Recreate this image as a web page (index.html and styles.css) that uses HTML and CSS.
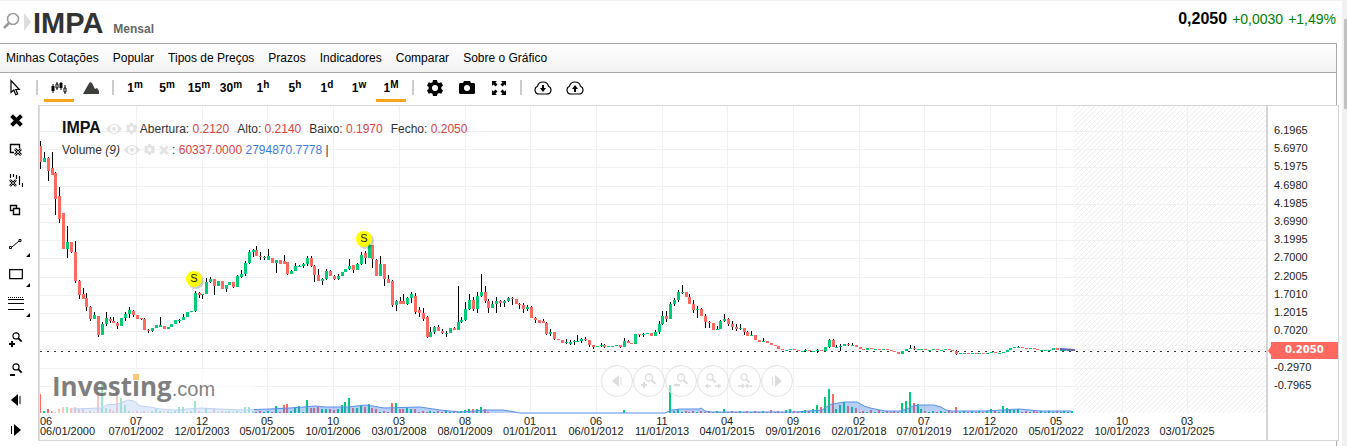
FILE: index.html
```html
<!DOCTYPE html>
<html lang="pt">
<head>
  <meta charset="UTF-8">
  <title>IMPA - Mensal</title>
  <link rel="stylesheet" href="styles.css">
</head>
<body>
  <!-- shared icons -->
  <svg class="defs">
    <symbol id="gear" viewBox="0 0 16 16">
      <path fill-rule="evenodd" fill="currentColor" d="M6 0h4l.5 2.3 1.5.8 2.2-.8 1.8 3.2-1.600 1.600v1.800l1.600 1.600-1.800 3.200-2.200-.8-1.500.8L10 16H6l-.5-2.300-1.500-.8-2.200.8L0 10.500l1.600-1.600V7.100L0 5.500l1.800-3.200 2.200.8 1.500-.8zM8 5a3 3 0 1 0 0 6 3 3 0 0 0 0-6z"/>
    </symbol>
    <symbol id="eye" viewBox="0 0 16 12">
      <path fill-rule="evenodd" fill="currentColor" d="M0 6Q8-4 16 6 8 16 0 6zM8 2a4 4 0 1 0 0 8 4 4 0 0 0 0-8z"/>
      <circle cx="8" cy="6" r="2" fill="currentColor"/>
    </symbol>
    <symbol id="cross" viewBox="0 0 12 12">
      <path d="M1.500 1.500l9 9M10.500 1.500l-9 9" stroke="currentColor" stroke-width="3.600"/>
    </symbol>
    <symbol id="lens" viewBox="0 0 16 16">
      <circle cx="8" cy="4.500" r="3.500" fill="none" stroke="currentColor" stroke-width="1.300"/>
      <path d="M10.500 7l4 4" stroke="currentColor" stroke-width="2.200"/>
    </symbol>
    <symbol id="left" viewBox="0 0 16 16">
      <path d="M10 2v12L3 8z" fill="currentColor"/><path d="M12 4v8" stroke="currentColor"/>
    </symbol>
    <symbol id="right" viewBox="0 0 16 16">
      <path d="M6 2v12l7-6z" fill="currentColor"/><path d="M3.500 4v8" stroke="currentColor"/>
    </symbol>
    <symbol id="cloud" viewBox="0 0 18 14">
      <path d="M5 13a4 4 0 0 1-1.500-7.700C4 2.500 6 1 9 1s5 1.500 5.500 4.300A4 4 0 0 1 13 13z" fill="none" stroke="currentColor" stroke-width="1.200"/>
    </symbol>
  </svg>

  <div class="page">
    <div class="widget">
      <header class="header">
        <svg class="search-icon" width="32" height="26" viewBox="0 0 32 26">
          <circle cx="13" cy="12" r="5.500" fill="none" stroke="#999" stroke-width="1.500"/>
          <path d="M9 16l-5 5" stroke="#999" stroke-width="2.500"/>
          <path d="M24 6l7 9-7 9z" fill="#ddd"/>
        </svg>
        <h1>IMPA</h1>
        <span class="period">Mensal</span>
        <div class="quote">
          <strong>0,2050</strong>
          <span>+0,0030</span>
          <span>+1,49%</span>
        </div>
      </header>

      <div class="frame">
        <nav class="menu">
          <a href="#">Minhas Cotações</a>
          <a href="#">Popular</a>
          <a href="#">Tipos de Preços</a>
          <a href="#">Prazos</a>
          <a href="#">Indicadores</a>
          <a href="#">Comparar</a>
          <a href="#">Sobre o Gráfico</a>
        </nav>

        <div class="toolbar">
          <button aria-label="Cursor"><svg width="12" height="18" viewBox="0 0 12 18"><path d="M2 1.500v12l2.800-2.500 1.900 4.800 2-.9-1.900-4.400h3.500z" fill="#fff" stroke="#000" stroke-width="1.200"/></svg></button>
          <i class="sep"></i>
          <button class="on" aria-label="Velas"><svg width="18" height="14" viewBox="0 0 18 14"><path d="M3 3v9M7 1v8M11 1v8M15 4v9" stroke="#000"/><path d="M1.500 5h3v5h-3zM9.500 2h3v5h-3z"/><path d="M6 3h2v4H6zM14 7h2v4h-2z" fill="#fff" stroke="#000"/></svg></button>
          <button aria-label="Área"><svg width="16" height="14" viewBox="0 0 16 14"><path d="M0 13L5 4l2-3 2 1 3 6 2-1 2 3v3z" fill="#3c3f3a"/></svg></button>
          <i class="sep"></i>
          <button>1<sup>m</sup></button>
          <button>5<sup>m</sup></button>
          <button>15<sup>m</sup></button>
          <button>30<sup>m</sup></button>
          <button>1<sup>h</sup></button>
          <button>5<sup>h</sup></button>
          <button>1<sup>d</sup></button>
          <button>1<sup>w</sup></button>
          <button class="on">1<sup>M</sup></button>
          <i class="sep"></i>
          <button aria-label="Definições"><svg width="16" height="16"><use href="#gear"/></svg></button>
          <button aria-label="Imagem"><svg width="16" height="13" viewBox="0 0 16 13"><path fill-rule="evenodd" d="M1 2h3l1-2h6l1 2h3l1 1v9l-1 1H1l-1-1V3zM8 4a3 3 0 1 0 0 6 3 3 0 0 0 0-6z"/></svg></button>
          <button aria-label="Ecrã inteiro"><svg width="14" height="14" viewBox="0 0 14 14"><path d="M0 0h5L3.500 1.500 5.500 3.500 3.500 5.500 1.500 3.500 0 5zM14 0v5l-1.500-1.500-2 2-2-2 2-2L9 0zM0 14V9l1.500 1.500 2-2 2 2-2 2L5 14zM14 14H9l1.500-1.500-2-2 2-2 2 2L14 9z"/></svg></button>
          <i class="sep"></i>
          <button aria-label="Carregar"><svg width="18" height="14" viewBox="0 0 18 14"><use href="#cloud"/><path d="M8 4h2v3h2l-3 4-3-4h2z"/></svg></button>
          <button aria-label="Guardar"><svg width="18" height="14" viewBox="0 0 18 14"><use href="#cloud"/><path d="M8 11h2V8h2L9 4 6 8h2z"/></svg></button>
        </div>

        <div class="workspace">
          <div class="tools">
            <button aria-label="Fechar"><svg width="13" height="13" viewBox="0 0 12 12"><use href="#cross"/></svg></button>
            <button aria-label="Apagar desenhos"><svg width="14" height="14" viewBox="0 0 14 14"><path d="M5 9.500H1.500v-8h9V5" fill="none" stroke="#000" stroke-width="1.400"/><path d="M6 6l6 6M12 6l-6 6" stroke="#000" stroke-width="2.600"/><path d="M6 6l6 6M12 6l-6 6" stroke="#fff" stroke-width=".7"/></svg></button>
            <button aria-label="Apagar indicadores"><svg width="14" height="15" viewBox="0 0 14 15"><path d="M1.500 1v4M4.500 1v3M7.500 2v4M10.500 3v9M13.500 10v4" stroke="#000" stroke-width="1.200"/><path d="M1 7l6 6M7 7l-6 6" stroke="#000" stroke-width="2.400"/><path d="M1 7l6 6M7 7l-6 6" stroke="#fff" stroke-width=".6"/></svg></button>
            <button aria-label="Duplicar"><svg width="14" height="12" viewBox="0 0 14 12"><path d="M4 6.500H1.500v-5h6V4M4.500 4.500h6v6h-6z" fill="none" stroke="#000" stroke-width="1.400"/></svg></button>
            <button class="more gap-small" aria-label="Linha"><svg width="14" height="12" viewBox="0 0 14 12"><path d="M3 9l7-6" stroke="#000"/><path d="M.5 8.500h2v2h-2zM10 1.500h2v2h-2z" fill="#fff" stroke="#000"/></svg></button>
            <button class="more" aria-label="Retângulo"><svg width="14" height="12" viewBox="0 0 14 12"><path d="M.7 1.700h12.600v9H.7z" fill="none" stroke="#000" stroke-width="1.200"/></svg></button>
            <button class="more" aria-label="Fibonacci"><svg width="16" height="14" viewBox="0 0 16 14"><path d="M0 .5h16" stroke="#000" stroke-dasharray="1 1"/><path d="M0 2.500h16M0 6.500h16M0 12.500h16" stroke="#000"/></svg></button>
            <button class="gap-large" aria-label="Ampliar"><svg width="14" height="16" viewBox="0 0 14 16"><use href="#lens" x="0" y="0" width="14" height="14"/><path d="M0 12h6M3 9v6" stroke="#000" stroke-width="2"/></svg></button>
            <button aria-label="Reduzir"><svg width="14" height="14" viewBox="0 0 14 14"><use href="#lens" width="14" height="14"/><path d="M1 12h5" stroke="#000" stroke-width="2"/></svg></button>
            <button aria-label="Anterior"><svg width="16" height="16"><use href="#left"/></svg></button>
            <button aria-label="Seguinte"><svg width="16" height="16"><use href="#right"/></svg></button>
          </div>

          <div class="chart">
            <div class="plot">
              <svg id="plot"></svg>

              <div class="legend">
                <div class="legend-row">
                  <b>IMPA</b>
                  <svg class="faint" width="16" height="12"><use href="#eye"/></svg>
                  <svg class="faint" width="11" height="11"><use href="#gear"/></svg>
                  <span class="fields">
                    <span>Abertura: <em>0.2120</em></span>
                    <span>Alto: <em>0.2140</em></span>
                    <span>Baixo: <em>0.1970</em></span>
                    <span>Fecho: <em>0.2050</em></span>
                  </span>
                </div>
                <div class="legend-row volume">
                  <span>Volume <i>(9)</i></span>
                  <svg class="faint" width="16" height="12"><use href="#eye"/></svg>
                  <svg class="faint" width="11" height="11"><use href="#gear"/></svg>
                  <svg class="faint" width="10" height="10" viewBox="0 0 12 12"><use href="#cross"/></svg>
                  <span>: <em>60337.0000</em> <em class="blue">2794870.7778</em> |</span>
                </div>
              </div>

              <div class="logo">
                <b>Invest<span class="dot">i</span>ng</b><span>.com</span>
              </div>

              <div class="nav-buttons">
                <button aria-label="Recuar"><svg width="16" height="16"><use href="#left"/></svg></button>
                <button aria-label="Mais zoom"><svg width="16" height="16" viewBox="0 0 16 16"><use href="#lens" width="16" height="16"/><path d="M0 12h6M3 9v6" stroke="currentColor" stroke-width="2"/></svg></button>
                <button aria-label="Menos zoom"><svg width="16" height="16" viewBox="0 0 16 16"><use href="#lens" width="16" height="16"/><path d="M1 12h6" stroke="currentColor" stroke-width="2"/></svg></button>
                <button aria-label="Alargar"><svg width="16" height="16" viewBox="0 0 16 16"><use href="#lens" x="-2" width="14" height="14"/><path d="M0 13h6M10 13h6M3 11l-2 2 2 2M13 11l2 2-2 2" fill="none" stroke="currentColor" stroke-width="1.300"/></svg></button>
                <button aria-label="Estreitar"><svg width="16" height="16" viewBox="0 0 16 16"><use href="#lens" width="14" height="14"/><path d="M1 13h6M9 13h6M5 11l2 2-2 2M11 11l-2 2 2 2" fill="none" stroke="currentColor" stroke-width="1.300"/></svg></button>
                <button aria-label="Avançar"><svg width="16" height="16"><use href="#right"/></svg></button>
              </div>
            </div>
            <svg id="scale"></svg>
          </div>
        </div>
      </div>
    </div>
    <div class="scrollbar"><div class="thumb"></div></div>
  </div>
  <script src="chart.js"></script>
</body>
</html>
```
FILE: styles.css
```css
body {
  margin: 0;
  font-family: Arial, "Liberation Sans", sans-serif;
  font-size: 12px;
  color: #333;
  background: #fff;
}

button {
  position: relative;
  display: flex;
  align-items: center;
  justify-content: center;
  padding: 0;
  border: 0;
  background: none;
  color: #000;
  font: inherit;
  cursor: pointer;
}

.defs {
  display: none;
}

.page {
  display: flex;
  min-height: 100vh;
}

.widget {
  flex: 1;
  min-width: 0;
  display: flex;
  flex-direction: column;
  border-top: 1px solid #f3f3f3;
}

/* header */
.header {
  display: flex;
  align-items: baseline;
  height: 42px;
  padding-right: 6px;
}

.search-icon {
  align-self: flex-start;
  margin-top: 6px;
}

.header h1 {
  margin: 4px 0 0 1px;
  font-size: 29px;
  line-height: 37px;
}

.period {
  margin-left: 10px;
  font-weight: bold;
  color: #666;
}

.quote {
  align-self: flex-start;
  display: flex;
  align-items: baseline;
  gap: 5px;
  margin-left: auto;
  padding-top: 9px;
  font-size: 14px;
  color: #008000;
}

.quote strong {
  font-size: 16px;
  color: #000;
}

/* menu and toolbar */
.frame {
  flex: 1;
  display: flex;
  flex-direction: column;
  margin-right: 5px;
  border-top: 1px solid #aaa;
  border-right: 1px solid #aaa;
}

.menu {
  display: flex;
  align-items: center;
  gap: 14px;
  height: 28px;
  padding-left: 6px;
  border-bottom: 1px solid #aaa;
  background: linear-gradient(#fff, #f2f2f2);
}

.menu a {
  color: #000;
  text-decoration: none;
}

.toolbar {
  display: flex;
  gap: 2px;
  height: 32px;
}

.toolbar button {
  width: 30px;
  height: 29px;
  font-weight: bold;
  line-height: 18px;
}

.toolbar .on {
  box-shadow: inset 0 -3px #f9a21b;
}

.toolbar sup {
  margin-bottom: 5px;
  font-size: 10px;
  line-height: 10px;
}

.sep {
  width: 2px;
  height: 15px;
  margin: 7px 4px;
  background: #ccc;
}

/* left tools */
.workspace {
  flex: 1;
  display: flex;
}

.tools {
  width: 38px;
}

.tools button {
  width: 32px;
  height: 30px;
}

.tools .gap-small {
  margin-top: 4px;
}

.tools .gap-large {
  margin-top: 6px;
}

.tools .more::after {
  content: "";
  position: absolute;
  right: 2px;
  bottom: 2px;
  border: 2px solid;
  border-color: transparent #000 #000 transparent;
}

/* chart */
.chart {
  position: relative;
  flex: 1;
  display: flex;
  height: 334px;
  margin-right: -3px;
  border: 1px solid #d5d5d5;
  background: #fff;
}

.plot {
  position: relative;
  flex: 1;
  min-width: 0;
  border-left: 1px solid #ddd;
}

#plot {
  display: block;
  width: 100%;
  height: 334px;
}

#scale {
  width: 70px;
  height: 334px;
  border-left: 2px solid #d5d5d5;
}

#plot text,
#scale text {
  font-size: 11px;
  fill: #222;
}

#scale .last {
  font: bold 10px "DejaVu Sans", sans-serif;
  fill: #fff;
}

.legend {
  position: absolute;
  top: 12px;
  left: 22px;
}

.legend-row {
  display: flex;
  align-items: center;
  height: 21px;
}

.legend-row b {
  margin-right: 5px;
  padding-bottom: 2px;
  font-size: 16px;
  line-height: 16px;
  color: #111;
}

.legend em {
  font-style: normal;
  color: #d9443f;
}

.legend .blue {
  color: #3c7de0;
}

.faint {
  flex: none;
  color: #e3e3e3;
}

.faint + .faint {
  margin-left: 4px;
}

.faint + span {
  margin-left: 3px;
}

.volume .faint {
  margin-left: 4px;
}

.fields {
  display: flex;
  gap: 8px;
}

.logo {
  position: absolute;
  left: 12px;
  top: 263px;
  height: 45px;
  width: 202px;
  display: flex;
  align-items: baseline;
  background: rgba(255, 255, 255, 0.6);
  color: rgba(92, 92, 92, 0.78);
  font-size: 20px;
  line-height: 34px;
}

.logo b {
  font-family: "Open Sans", sans-serif;
  font-size: 26px;
}

.dot {
  position: relative;
}

.dot::before {
  content: "";
  position: absolute;
  left: 1px;
  top: 6px;
  width: 6px;
  height: 6px;
  background: #fbc878;
}

.nav-buttons {
  position: absolute;
  left: calc(50% - 52px);
  top: 259px;
  display: flex;
}

.nav-buttons button {
  width: 32px;
  height: 32px;
  border: 1px solid #e2e2e2;
  border-radius: 50%;
  background: rgba(255, 255, 255, 0.5);
  color: #ddd;
}

/* page scrollbar */
.scrollbar {
  width: 5px;
  padding-top: 19px;
  background: #f1f1f1;
}

.thumb {
  height: 90px;
  margin-left: 2px;
  background: #c1c1c1;
}
```
FILE: chart.js
```js
const NS = "http://www.w3.org/2000/svg";
const STEP = 3.866;
const TOP = 106;
const LEFT = 40;
const BASE = 413;
const GREEN = "#0c7";
const RED = "#ff6960";

// [close, high, low, open] in vertical units; open defaults to the previous close
const candles = [
  [162,141,169,146],[158,152,162],[171,157,181],[175,152,175,168],[199,172,215,173],[219,187,223,196],[249,213,249,213],[242,226,258],[252,243,253],[281,241,283],
  [295,280,299],[299,288,299,294],[307,293,311,298],[319,306,321],[315,312,319],[335,316,337,316],[324,322,335],[318,312,326],[321,317,323,319],[323,317,323],
  [326,322,329],[318],[314,312,321],[310,307,318],[315,310,317,311],[319],[319,318,320,318],[330,318,330],[331,329,333],[328,328,332],
  [325],[325,317,327,327],[329,326,329,326],[327],[324],[320],[320,319,323],[317,314,320],[312],[311],
  [293,291,312],[295,292,298],[294,294,299],[282,278,294],[279,277,283],[286,280,295],[281],[289],[285,285,292],[282],
  [287,283,288],[276,275,287],[274,270,278,277],[263,261,276],[252,250,264],[250,249,257],[256,246,256],[257,252,260],[257,256,260],[256,249,260,260],
  [263,258,263,258],[260,260,273],[264],[264,255,264,261],[274,262,275,262],[271,270,274],[266,263,271],[266,265,267],[264,263,268],[258,256,266],
  [266,256,267],[275,265,282],[281,269,281],[279,278,285],[271,269,280],[276,270,276],[279,275,280],[276,274,280],[272],[269],
  [266,259,270],[270,265,273,265],[264,263,268],[255,252,265],[258,251,264,253],[245,244,258],[259,246,268],[276,259,276,260],[264,256,276],[279,264,286],
  [283,275,283],[305,280,307,281],[301,300,311],[304,297,304],[304,294,304,301],[298,297,305],[294,292,303],[312,293,314,296],[313,307,317,310],[319,308,321],
  [337,316,338,317],[332,327,336],[327,326,334],[331,325,331],[333,329,334],[333,331,337],[328],[330,327,330],[322,286,330],[320,317,323],
  [309,302,321],[300,294,310],[309,297,311],[296,292,313],[292,274,297],[301,286,303],[308,299,313],[304,301,308],[301,297,313],[303,300,307],
  [301,300,307],[298,297,302],[299,297,305],[304],[305,303,309],[309,303,313],[307,305,311],[318,306,318],[320,317,323],[323],
  [323,319,323,321],[334,322,335],[332,329,336],[339,332,340],[340],[343],[342,339,344],[342,340,345,344],[341,340,345],[341,335,342],
  [339,338,343],[340,337,341],[345,340,347],[347,345,349],[346],[345,343,347],[347,344,348],[346],[346],[345],
  [347,345,348],[341,338,347],[343,340,343],[344],[334],[335,334,337],[334,333,337],[333],[336],[332,330,336],
  [324,321,334],[316,311,325],[319,311,322],[304,302,319],[300,298,306],[292,290,302],[292,285,294],[297],[304,294,304],[310,300,313],
  [309,306,318],[316,308,316],[322,314,328],[323,321,328],[330],[329,326,329],[321,320,329],[319,314,322],[324,318,326],[327,321,330],
  [329,324,331],[328,324,330],[332,328,335],[336,331,336],[335,331,336],[340],[342],[341,338,342],[343],[345],
  [346],[349],[350],[350],[349],[350],[351],[351],[350,349,352],[351],
  [351],[350,349,353],[351],[347],[340,339,348],[347,339,347],[347,345,347],[346,344,351],[344],[345,343,346],
  [345,343,346],[347],[349],[350],[348],[349],[349],[350],[349],[350],
  [351],[352],[354],[351],[349],[348,345,349],[349,346,350],[349],[349],[350],
  [350],[349],[350],[350],[349],[350],[351],[354,350,355],[353],[353],
  [354],[353],[354],[353],[354],[353],[352],[353],[353],[352],
  [350],[348],[347],[347,346,348],[348],[349],[348],[349],[350],[350],
  [350],[350],[348],[350],[350],[350],[350],[350]
];

// bar heights by candle index; the others stay at 1-3px
const volumes = {
  0:19, 2:4, 5:4, 6:6, 7:6, 8:5, 9:6, 10:4, 11:4, 15:20, 16:30, 17:5, 18:4, 20:22, 21:15, 22:8, 30:4,
  36:6, 37:6, 40:12, 43:5, 45:4, 53:6, 54:6, 61:7, 63:8, 64:9, 66:6, 67:7, 69:13, 70:5, 71:5, 72:6, 73:4,
  74:4, 75:4, 76:3, 77:4, 78:8, 79:11, 80:15, 81:5, 82:5, 83:7, 84:6, 85:9, 86:5, 87:4, 91:10, 92:10,
  93:4, 94:4, 95:5, 96:4, 97:4, 110:3, 111:4, 112:4, 113:4, 114:6, 115:4, 151:3, 163:28, 164:2, 165:4,
  177:4, 189:3, 193:3, 194:4, 198:3, 200:4, 201:8, 202:6, 203:16, 204:24, 205:19, 206:4, 207:8, 208:11,
  209:7, 210:6, 211:5, 215:3, 217:3, 223:10, 224:12, 225:21, 226:10, 227:9, 228:4, 237:6, 246:4, 249:7,
  250:5, 251:4, 252:3, 253:4
};

const average = "71,409 102,408 106,405 118,404 128,400 134,401 140,406 150,407 160,409 175,410 200,408 240,410 270,409 290,408 304,407 315,406 325,407 348,407 365,405 373,406 384,408 420,407 440,410 460,412 475,411 485,410 503,410 515,412 520,413 665,413 672,410 680,409 699,409 701,408 705,411 712,412 795,412 822,410 828,406 832,404 845,402 857,402 864,406 870,408 885,411 900,411 907,409 913,406 920,405 934,405 941,407 946,410 952,411 985,411 1019,409 1040,411 1071,411";

const dates = ["07/01/2002", "12/01/2003", "05/01/2005", "10/01/2006", "03/01/2008", "08/01/2009", "01/01/2011", "06/01/2012", "11/01/2013", "04/01/2015", "09/01/2016", "02/01/2018", "07/01/2019", "12/01/2020", "05/01/2022", "10/01/2023", "03/01/2025"];
const prices = ["6.1965", "5.6970", "5.1975", "4.6980", "4.1985", "3.6990", "3.1995", "2.7000", "2.2005", "1.7010", "1.2015", "0.7020", "", "-0.2970", "-0.7965"];

function add(parent, name, attrs, text) {
  const el = document.createElementNS(NS, name);
  for (const key in attrs) el.setAttribute(key, attrs[key]);
  if (text) el.textContent = text;
  parent.appendChild(el);
  return el;
}

function rect(parent, x, y, width, height, fill) {
  return add(parent, "rect", { x, y, width, height, fill });
}

const plot = document.getElementById("plot");
const bottom = BASE - TOP;

// area with no data yet
const pattern = add(add(plot, "defs", {}), "pattern", { id: "hatch", width: 5, height: 5, patternUnits: "userSpaceOnUse" });
add(pattern, "path", { d: "M-1 1l2-2M0 5l5-5M4 6l2-2", stroke: "#eee" });
rect(plot, 1074 - LEFT, 0, "100%", bottom, "url(#hatch)");

// grid
prices.forEach((price, i) => rect(plot, 0, Math.round(25 + i * 18.2), "100%", 1, "#f1f1f1"));
dates.forEach((date, i) => {
  const x = Math.round(96 + i * 65.7);
  rect(plot, x, 0, 1, bottom, "#f1f1f1");
  add(plot, "text", { x, y: 319, "text-anchor": "middle" }, date.slice(0, 2));
  add(plot, "text", { x, y: 329, "text-anchor": "middle" }, date);
});
add(plot, "text", { x: 0, y: 319 }, "06");
add(plot, "text", { x: 0, y: 329 }, "06/01/2000");

add(plot, "line", { x1: 0, x2: "100%", y1: 245.5, y2: 245.5, stroke: "#333", "stroke-dasharray": "2 5" });

// candles and volume bars
let last = candles[0][3];
candles.forEach(([close, high, low, open = last], i) => {
  const x = Math.round(i * STEP);
  const top = Math.min(open, close);
  const end = Math.max(open, close);
  const color = close > open ? RED : GREEN;
  high = Math.min(high || top, top);
  low = Math.max(low || end, end);
  rect(plot, x, high - TOP, 1, low - high, "#000");
  rect(plot, x - 1, top - TOP, 3, Math.max(end - top, 1), color);
  const volume = volumes[i] || (i > 116 && i < 164 ? 0 : 1 + (i * 7) % 2);
  rect(plot, x - 1, bottom - volume, 2, volume, color);
  last = close;
});

const area = add(plot, "g", { transform: `translate(${-LEFT} ${-TOP})` });
add(area, "polygon", { points: `71,413 ${average} 1071,413`, fill: "#3f7fe8", "fill-opacity": 0.38 });
add(area, "polyline", { points: average, fill: "none", stroke: "#5a90ea", "stroke-width": 1 });
add(area, "path", { d: "M1060 348l15 1v2l-15-1z", fill: "#6a5fb0" });

// split markers
[[195, 280], [365, 240]].forEach(([x, y]) => {
  add(area, "circle", { cx: x + 1, cy: y + 1, r: 8, fill: "#000", "fill-opacity": 0.2 });
  add(area, "circle", { cx: x - 1, cy: y - 1, r: 8, fill: "#ff0" });
  add(area, "text", { x: x - 1, y: y + 2, "text-anchor": "middle" }, "S");
});

// price scale
const scale = document.getElementById("scale");
prices.forEach((price, i) => add(scale, "text", { x: 6, y: Math.round(28 + i * 18.2) }, price));
add(scale, "path", { d: "M0 245l3-5v-4h67v17H3v-4z", fill: RED });
add(scale, "text", { class: "last", x: 17, y: 247 }, "0.2050");
```
